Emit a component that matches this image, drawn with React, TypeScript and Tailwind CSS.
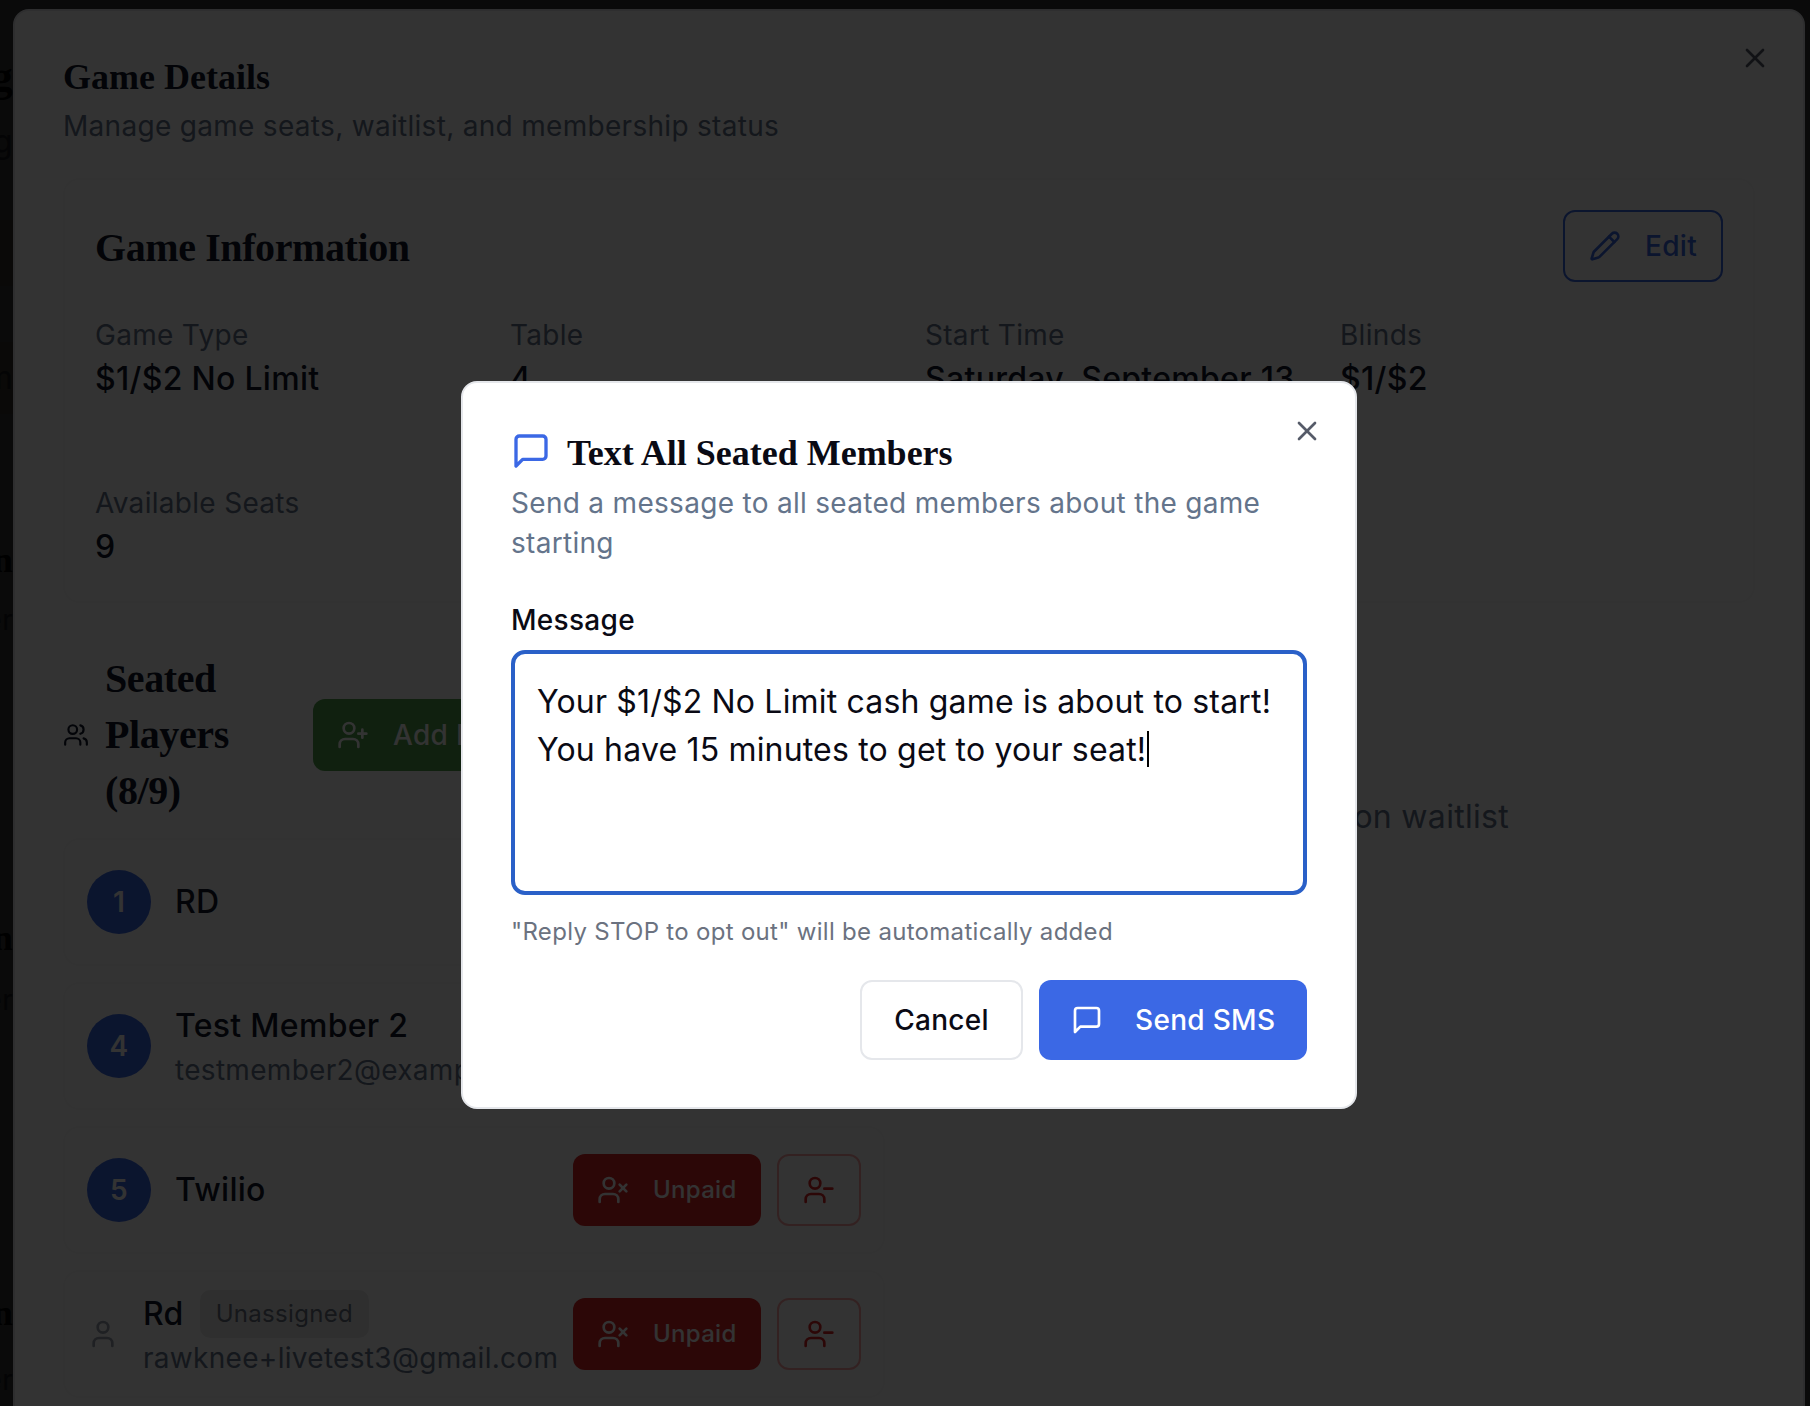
import React from 'react';
import { Pencil, User, UserMinus, UserPlus, Users, UserX, X } from 'lucide-react';

const infoItems = [
  { label: 'Game Type', value: '$1/$2 No Limit' },
  { label: 'Table', value: '4' },
  { label: 'Start Time', value: 'Saturday, September 13 at 7:00 PM' },
  { label: 'Blinds', value: '$1/$2' },
  { label: 'Available Seats', value: '9' },
];

const players = [
  { seat: '1', name: 'RD' },
  { seat: '4', name: 'Test Member 2', email: 'testmember2@example.com' },
  { seat: '5', name: 'Twilio' },
  { name: 'Rd', email: 'rawknee+livetest3@gmail.com' },
];

const serif = "font-['Liberation_Serif',serif] font-bold";

const MessageIcon = ({ className }: { className: string }) => (
  <svg className={className} viewBox="0 0 24 24" fill="none" stroke="currentColor" strokeWidth="2" strokeLinecap="round" strokeLinejoin="round">
    <path d="M21 15a2 2 0 0 1-2 2H7l-4 4V5a2 2 0 0 1 2-2h14a2 2 0 0 1 2 2z" />
  </svg>
);

// Strip of the page behind both dialogs, only its last letters show
const BackgroundStrip = () => (
  <div className="flex h-[1406px] w-[13px] flex-col items-end overflow-hidden">
    <div className={`mt-[52px] h-[50px] whitespace-nowrap text-[44px] leading-[50px] text-black ${serif}`}>g</div>
    <div className="mt-[22px] h-[36px] whitespace-nowrap text-[32px] leading-[36px] text-gray-500">g</div>
    <div className="mt-[60px] h-[66px] w-full bg-amber-100" />
    <div className="mt-[56px] flex h-[72px] w-full items-center justify-end bg-amber-100 text-[32px] text-gray-500">m</div>
    <div className={`mt-[126px] h-[40px] whitespace-nowrap text-[36px] leading-[40px] text-black ${serif}`}>n</div>
    <div className="mt-[22px] h-[36px] whitespace-nowrap text-[28px] leading-[36px] text-gray-500">er</div>
    <div className={`mt-[280px] h-[40px] whitespace-nowrap text-[36px] leading-[40px] text-black ${serif}`}>n</div>
    <div className="mt-[24px] h-[36px] whitespace-nowrap text-[28px] leading-[36px] text-gray-500">er</div>
    <div className={`mt-[275px] h-[40px] whitespace-nowrap text-[36px] leading-[40px] text-black ${serif}`}>n</div>
    <div className="mt-[29px] h-[36px] whitespace-nowrap text-[28px] leading-[36px] text-gray-500">er</div>
  </div>
);

const PlayerRow = ({ player }: { player: (typeof players)[number] }) => (
  <div className="flex h-[128px] items-center justify-between rounded-[16px] border-2 border-[#fafafa] px-[22px]">
    <div className="flex items-center gap-[24px]">
      {player.seat ? (
        <div className="flex h-[64px] w-[64px] items-center justify-center rounded-full bg-[#3b68e5] text-[28px] font-semibold text-white">
          {player.seat}
        </div>
      ) : (
        <User className="h-[32px] w-[32px] text-gray-400" />
      )}
      <div>
        <div className="flex items-center gap-[16px]">
          <span className="text-[32px] font-medium leading-[48px] text-[#0f172a]">{player.name}</span>
          {!player.seat && (
            <span className="rounded-[10px] bg-[#ececec] px-[16px] py-[8px] text-[24px] leading-[32px] text-[#6b7280]">Unassigned</span>
          )}
        </div>
        {player.email && <p className="text-[28px] leading-[40px] text-[#64748b]">{player.email}</p>}
      </div>
    </div>
    <div className="flex items-center gap-[16px]">
      <button className="flex h-[72px] w-[188px] items-center gap-[24px] rounded-[12px] bg-[#dc2626] px-[24px] text-[24px] font-medium text-white">
        <UserX className="h-[32px] w-[32px] shrink-0" />
        Unpaid
      </button>
      <button className="flex h-[72px] w-[84px] items-center justify-center rounded-[12px] border-2 border-[#fca5a5] text-[#dc2626]">
        <UserMinus className="h-[32px] w-[32px]" />
      </button>
    </div>
  </div>
);

const GameDetails = () => (
  <div className="absolute left-[13px] top-[9px] h-[1500px] w-[1792px] rounded-[16px] border-2 border-gray-200 bg-white p-[48px]">
    <button className="absolute right-[32px] top-[31px] text-[#0f172a] opacity-70">
      <X className="h-[32px] w-[32px]" />
    </button>
    <h2 className={`text-[36px] leading-[36px] tracking-normal text-[#0f172a] ${serif}`}>Game Details</h2>
    <p className="mt-[11px] text-[28px] leading-[40px] text-[#64748b]">Manage game seats, waitlist, and membership status</p>

    <section className="mt-[32px] w-[1692px] rounded-[16px] border-2 border-[#fafafa] p-[30px]">
      <div className="flex h-[72px] items-center justify-between">
        <h3 className={`mt-[4px] text-[40px] tracking-[-0.4px] text-[#0f172a] ${serif}`}>Game Information</h3>
        <button className="flex h-[72px] w-[160px] items-center gap-[24px] rounded-[12px] border-2 border-[#3b68e5] px-[24px] text-[28px] font-medium text-[#3b68e5]">
          <Pencil className="h-[32px] w-[32px]" />
          Edit
        </button>
      </div>
      <div className="mt-[33px] grid grid-cols-4 gap-x-[32px] gap-y-[32px]">
        {infoItems.map((item) => (
          <div key={item.label}>
            <p className="text-[28px] leading-[40px] text-[#64748b]">{item.label}</p>
            <p className="text-[32px] font-medium leading-[48px] text-[#0f172a]">{item.value}</p>
          </div>
        ))}
      </div>
    </section>

    <div className="mt-[48px] grid w-[1692px] grid-cols-2 gap-x-[48px]">
      <div>
        <div className="flex h-[168px] items-center">
          <Users className="h-[26px] w-[26px] shrink-0 text-[#0f172a]" />
          <h3 className={`ml-[16px] w-[170px] text-[40px] leading-[56px] tracking-[-0.4px] text-[#0f172a] ${serif}`}>Seated Players (8/9)</h3>
          <button className="ml-[38px] flex h-[72px] w-[260px] items-center gap-[24px] rounded-[12px] bg-[#50a04b] px-[24px] text-[28px] font-medium text-white">
            <UserPlus className="h-[32px] w-[32px]" />
            Add Player
          </button>
        </div>
        <div className="mt-[19px] flex flex-col gap-[16px]">
          {players.map((player) => (
            <PlayerRow key={player.name} player={player} />
          ))}
        </div>
      </div>
      <div className="flex h-[332px] items-center justify-center text-[32px] text-[#64748b]">No players on waitlist</div>
    </div>
  </div>
);

const SmsDialog = () => (
  <div className="absolute left-[461px] top-[381px] flex w-[896px] flex-col rounded-[16px] border-2 border-gray-200 bg-white px-[48px] pb-[47px] pt-[48px]">
    <button className="absolute right-[32px] top-[32px] text-[#0f172a] opacity-70">
      <X className="h-[32px] w-[32px]" />
    </button>
    <div className="flex items-center gap-[16px]">
      <MessageIcon className="h-[40px] w-[40px] -translate-y-[2px] text-[#3b68e5]" />
      <h2 className={`text-[36px] leading-[44px] tracking-normal text-[#0a0a14] ${serif}`}>Text All Seated Members</h2>
    </div>
    <p className="mt-[8px] text-[28px] leading-[40px] text-[#64748b]">Send a message to all seated members about the game starting</p>
    <label className="mt-[37px] text-[28px] font-medium leading-[40px] text-[#0a0a14]">Message</label>
    <div className="mt-[10px] h-[245px] rounded-[14px] border-4 border-[#2a60c8] px-[22px] py-[24px] text-[32px] leading-[47px] tracking-[0.18px] text-[#0a0a14]">
      Your $1/$2 No Limit cash game is about to start! You have 15 minutes to get to your seat!
      <span className="ml-[1px] inline-block h-[36px] w-[2px] translate-y-[6px] bg-black" />
    </div>
    <p className="mt-[21px] text-[24px] leading-[32px] text-[#6b7280]">"Reply STOP to opt out" will be automatically added</p>
    <div className="mt-[32px] flex justify-end gap-[16px]">
      <button className="flex h-[80px] w-[163px] items-center justify-center rounded-[12px] border-2 border-gray-200 bg-white text-[28px] font-medium text-[#0a0a14]">
        Cancel
      </button>
      <button className="flex h-[80px] w-[268px] items-center gap-[32px] whitespace-nowrap rounded-[12px] bg-[#3b68e5] px-[32px] text-[28px] font-medium text-white">
        <MessageIcon className="h-[32px] w-[32px] shrink-0" />
        Send SMS
      </button>
    </div>
  </div>
);

const App = () => {
  return (
    <div className="relative h-[1406px] w-full overflow-hidden bg-white font-[Inter,sans-serif] tracking-[0.3px]">
      <BackgroundStrip />
      <div className="absolute inset-0 bg-black/80" />
      <GameDetails />
      <div className="absolute inset-0 bg-black/80" />
      <SmsDialog />
    </div>
  );
};

export default App;
